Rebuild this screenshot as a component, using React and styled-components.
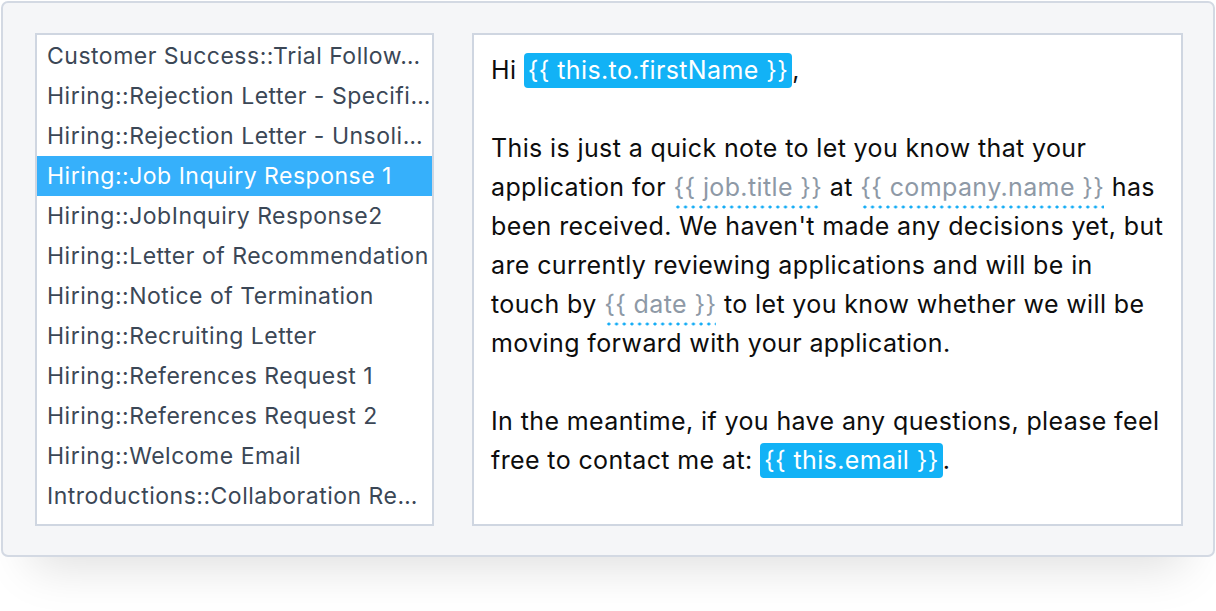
import React from "react";
import styled, { createGlobalStyle } from "styled-components";

const Global = createGlobalStyle`
  html, body { margin: 0; padding: 0; background: #fff; }
  body { font-family: Inter, "Noto Sans", sans-serif; -webkit-font-smoothing: antialiased; }
`;

const Page = styled.div`
  width: 1216px;
  height: 611px;
  padding: 1px;
  box-sizing: border-box;
`;

const Card = styled.div`
  width: 1214px;
  height: 556px;
  box-sizing: border-box;
  background: #f5f6f8;
  border: 2px solid #d3d9e3;
  border-radius: 7px;
  box-shadow: 0 40px 45px -30px rgba(0, 0, 0, 0.13);
  padding: 30px 30px 29px 32px;
  display: flex;
  gap: 38px;
`;

const List = styled.ul`
  list-style: none;
  margin: 0;
  padding: 1px 0 7px;
  width: 399px;
  flex: none;
  background: #fff;
  border: 2px solid #cfd6e1;
  box-sizing: border-box;
`;

const Item = styled.li`
  height: 40px;
  line-height: 40px;
  padding: 0 2px 0 10px;
  font-size: 23px;
  letter-spacing: 0.5px;
  color: ${(p) => (p.$active ? "#ffffff" : "#3b4756")};
  background: ${(p) => (p.$active ? "#36b0fb" : "transparent")};
  white-space: nowrap;
  overflow: hidden;
`;

const Editor = styled.div`
  flex: 1;
  background: #fff;
  border: 2px solid #cfd6e1;
  box-sizing: border-box;
  padding: 16px 16px 0 17px;
  font-size: 25px;
  letter-spacing: 0.38px;
  line-height: 39px;
  color: #0d0d0d;
`;

const Para = styled.p`
  margin: 0 0 39px;
  white-space: nowrap;
`;

const Pill = styled.span`
  display: inline-block;
  background: #12b2f6;
  color: #fff;
  border-radius: 4px;
  padding: 0 4px;
  line-height: 35px;
`;

const Var = styled.span`
  color: #8e99a6;
  padding-bottom: 7px;
  background-image: radial-gradient(circle, #14acf5 1.4px, transparent 1.7px);
  background-size: 7.7px 4px;
  background-repeat: repeat-x;
  background-position: 1px bottom;
`;

const items = [
  "Customer Success::Trial Follow…",
  "Hiring::Rejection Letter - Specifi…",
  "Hiring::Rejection Letter - Unsoli…",
  "Hiring::Job Inquiry Response 1",
  "Hiring::JobInquiry Response2",
  "Hiring::Letter of Recommendation",
  "Hiring::Notice of Termination",
  "Hiring::Recruiting Letter",
  "Hiring::References Request 1",
  "Hiring::References Request 2",
  "Hiring::Welcome Email",
  "Introductions::Collaboration Re…",
];

export default function App() {
  return (
    <Page>
      <Global />
      <Card>
        <List>
          {items.map((t, i) => (
            <Item key={t} $active={i === 3}>
              {t}
            </Item>
          ))}
        </List>
        <Editor>
          <Para>
            Hi <Pill>{"{{ this.to.firstName }}"}</Pill>,
          </Para>
          <Para>
            This is just a quick note to let you know that your
            <br />
            application for <Var>{"{{ job.title }}"}</Var> at{" "}
            <Var>{"{{ company.name }}"}</Var> has
            <br />
            been received. We haven't made any decisions yet, but
            <br />
            are currently reviewing applications and will be in
            <br />
            touch by <Var>{"{{ date }}"}</Var> to let you know whether we will be
            <br />
            moving forward with your application.
          </Para>
          <Para>
            In the meantime, if you have any questions, please feel
            <br />
            free to contact me at: <Pill>{"{{ this.email }}"}</Pill>.
          </Para>
        </Editor>
      </Card>
    </Page>
  );
}
